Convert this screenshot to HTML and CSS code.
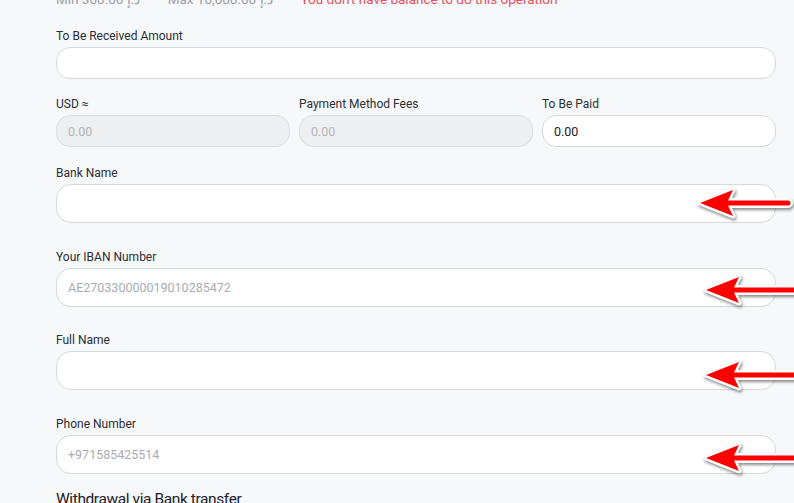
FILE: index.html
```html
<!DOCTYPE html>
<html lang="en">
<head>
  <meta charset="UTF-8" />
  <title>Withdraw</title>
  <link rel="stylesheet" href="styles.css">
</head>
<body>
  <div class="form">
    <div class="limits">
      <span class="limit">Min 300.00 د.إ</span>
      <span class="limit">Max 10,000.00 د.إ</span>
      <span class="warning">You don't have balance to do this operation</span>
    </div>

    <div class="field">
      <label>To Be Received Amount</label>
      <input type="text" class="input small" />
    </div>

    <div class="field-row">
      <div class="field">
        <label>USD ≈</label>
        <input type="text" class="input small" value="0.00" disabled />
      </div>
      <div class="field">
        <label>Payment Method Fees</label>
        <input type="text" class="input small" value="0.00" disabled />
      </div>
      <div class="field">
        <label>To Be Paid</label>
        <input type="text" class="input small" value="0.00" />
      </div>
    </div>

    <div class="field big bank">
      <label>Bank Name</label>
      <input type="text" class="input" />
      <svg class="arrow" width="100" height="40" viewBox="0 0 100 40"><path d="M6 20 L39 7 L34 17.5 L94 17.5 A2.5 2.5 0 0 1 94 22.5 L34 22.5 L39 33 Z" /></svg>
    </div>

    <div class="field big iban">
      <label>Your IBAN Number</label>
      <input type="text" class="input" placeholder="AE270330000019010285472" />
      <svg class="arrow" width="100" height="40" viewBox="0 0 100 40"><path d="M6 20 L39 7 L34 17.5 L98 17.5 L98 22.5 L34 22.5 L39 33 Z" /></svg>
    </div>

    <div class="field big name">
      <label>Full Name</label>
      <input type="text" class="input" />
      <svg class="arrow" width="100" height="40" viewBox="0 0 100 40"><path d="M6 20 L39 7 L34 17.5 L98 17.5 L98 22.5 L34 22.5 L39 33 Z" /></svg>
    </div>

    <div class="field big phone">
      <label>Phone Number</label>
      <input type="text" class="input" placeholder="+971585425514" />
      <svg class="arrow" width="100" height="40" viewBox="0 0 100 40"><path d="M6 20 L39 7 L34 17.5 L98 17.5 L98 22.5 L34 22.5 L39 33 Z" /></svg>
    </div>

    <h3 class="section-title">Withdrawal via Bank transfer</h3>
  </div>
</body>
</html>
```

FILE: styles.css
```css
body {
  margin: 0;
  font-family: Roboto, "Noto Sans", sans-serif;
  background-color: #f7f8fa;
  color: #2a2e36;
  overflow: hidden;
}

.form {
  padding: 0 18px 0 56px;
}

.limits {
  margin-top: -9px;
  margin-bottom: 20px;
  height: 17px;
  line-height: 17px;
  font-size: 13.5px;
  white-space: nowrap;
}

.limit {
  color: #9a9ea6;
  margin-right: 24px;
}

.warning {
  color: #e94f5b;
}

.field {
  position: relative;
  margin-bottom: 17px;
}

.field label {
  display: block;
  font-size: 12px;
  line-height: 17px;
  margin-bottom: 2px;
  color: #2a2e36;
}

.field-row {
  display: flex;
  gap: 9px;
}

.field-row .field {
  flex: 1;
  margin-bottom: 18px;
}

.input {
  display: block;
  box-sizing: border-box;
  width: 100%;
  height: 39px;
  padding: 0 11px;
  border: 1px solid #d6d8dc;
  border-radius: 15px;
  background-color: #ffffff;
  font-family: Roboto, "Noto Sans", sans-serif;
  font-size: 12.5px;
  color: #1d2129;
  outline: none;
}

.input.small {
  height: 32px;
  border-radius: 14px;
}

.input::placeholder {
  color: #a9adb3;
}

.input:disabled {
  background-color: #eeeff1;
  border-color: #dcdee2;
  color: #b2b5ba;
}

.field.big {
  margin-bottom: 26px;
}

.field.iban {
  margin-bottom: 25px;
}

.field.phone {
  margin-bottom: 0;
}

.arrow {
  position: absolute;
  left: 644px;
  top: 21px;
  overflow: visible;
  filter: drop-shadow(1px 2px 1.5px rgba(0, 0, 0, 0.45));
}

.arrow path {
  fill: #ff0000;
  stroke: #ffffff;
  stroke-width: 5;
  stroke-linejoin: round;
  paint-order: stroke;
}

.bank .arrow {
  left: 638px;
  top: 18px;
}

.name .arrow {
  top: 23px;
}

.phone .arrow {
  top: 22px;
}

.section-title {
  margin: 15px 0 0;
  font-size: 15.5px;
  line-height: 20px;
  letter-spacing: -0.4px;
  font-weight: 400;
  color: #1d2129;
}
```
